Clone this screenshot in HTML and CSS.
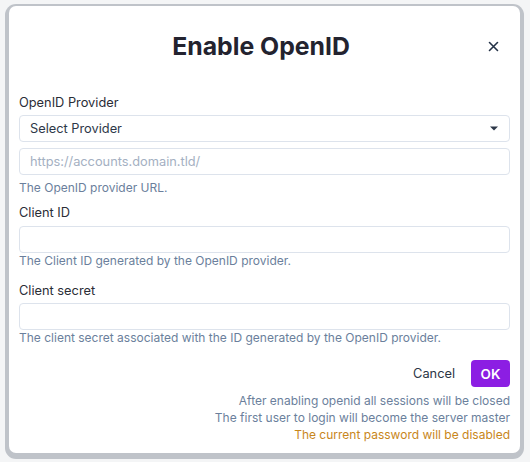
FILE: index.html
```html
<!DOCTYPE html>
<html>
<head>
<meta charset="utf-8">
<link rel="stylesheet" href="styles.css">
</head>
<body>
<div class="overlay">
  <div class="modal">
    <div class="header">
      <h1 class="title">Enable OpenID</h1>
      <button class="close" aria-label="Close">
        <svg width="11" height="11" viewBox="0 0 11 11"><path d="M1.5 1.5L9.5 9.5M9.5 1.5L1.5 9.5" stroke="#243247" stroke-width="1.6" stroke-linecap="round"/></svg>
      </button>
    </div>
    <div class="body">
      <label class="label l1">OpenID Provider</label>
      <div class="field select">
        <span class="value">Select Provider</span>
        <svg class="caret" width="8" height="5" viewBox="0 0 8 5"><path d="M0 0.5H8L4 4.5Z" fill="#2d3748"/></svg>
      </div>
      <div class="field url"><span class="placeholder">https://accounts.domain.tld/</span></div>
      <div class="help h1">The OpenID provider URL.</div>
      <label class="label l2">Client ID</label>
      <div class="field f2"></div>
      <div class="help">The Client ID generated by the OpenID provider.</div>
      <label class="label l3">Client secret</label>
      <div class="field f3"></div>
      <div class="help">The client secret associated with the ID generated by the OpenID provider.</div>
      <div class="actions">
        <button class="btn cancel">Cancel</button>
        <button class="btn ok">OK</button>
      </div>
      <div class="notes">
        <div>After enabling openid all sessions will be closed</div>
        <div>The first user to login will become the server master</div>
        <div class="warn">The current password will be disabled</div>
      </div>
    </div>
  </div>
</div>
</body>
</html>
```
FILE: styles.css
```css
* { box-sizing: border-box; }
html, body { margin: 0; padding: 0; }
body {
  width: 530px;
  height: 462px;
  background: #f4f5f6;
  font-family: Inter, "Noto Sans", sans-serif;
  overflow: hidden;
}
.overlay {
  padding: 6px 10px 0 9px;
}
.modal {
  width: 511px;
  height: 447px;
  background: #ffffff;
  border-radius: 7px;
  box-shadow: 0 2px 0 4px #bfc3c9;
  display: flex;
  flex-direction: column;
}
.header {
  height: 87px;
  padding-top: 22px;
  padding-right: 7px;
  position: relative;
  display: flex;
  justify-content: center;
  align-items: flex-start;
}
.title {
  margin: 0;
  font-size: 24.8px;
  line-height: 36px;
  font-weight: 700;
  color: #23232f;
}
.close {
  position: absolute;
  right: 21px;
  top: 35px;
  width: 11px;
  height: 11px;
  padding: 0;
  border: 0;
  background: none;
  display: flex;
}
.body {
  padding: 0 10px;
  display: flex;
  flex-direction: column;
}
.label {
  font-size: 12.8px;
  line-height: 20px;
  color: #2a2d36;
}
.l2 { margin-top: 7px; }
.l3 { margin-top: 12px; }
.field {
  height: 27px;
  border: 1px solid #dde3ec;
  border-radius: 4px;
  display: flex;
  align-items: center;
  padding: 0 10px;
  font-size: 12.8px;
}
.select { margin-top: 2px; justify-content: space-between; }
.select .value { color: #2d3748; }
.caret { margin-right: 1px; }
.url { margin-top: 6px; }
.placeholder { color: #a4b0c2; }
.f2 { margin-top: 3px; }
.f3 { margin-top: 2px; }
.help {
  font-size: 12px;
  line-height: 16px;
  color: #6b7f9c;
}
.h1 { margin-top: 5px; }
.actions {
  margin-top: 14px;
  display: flex;
  justify-content: flex-end;
  align-items: center;
  gap: 16px;
}
.btn {
  font-family: Inter, "Noto Sans", sans-serif;
  border: 0;
  background: none;
  font-size: 12.8px;
  height: 27px;
  padding: 0;
  border-radius: 4px;
}
.cancel { color: #2b3544; }
.ok {
  width: 39px;
  background: #8c1ee3;
  color: #ffffff;
  font-weight: 600;
  font-size: 13.5px;
}
.notes {
  margin-top: 5px;
  text-align: right;
  font-size: 12px;
  line-height: 17px;
  color: #6b7f9c;
}
.warn { color: #c8861b; }
```
